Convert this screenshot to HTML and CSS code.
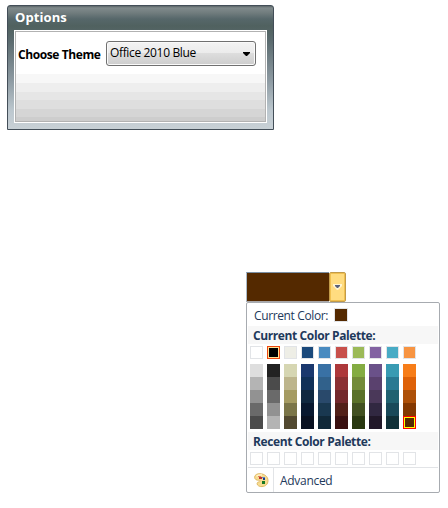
FILE: index.html
```html
<!DOCTYPE html>
<html lang="en">
<head>
<meta charset="utf-8">
<title>Options</title>
<link rel="stylesheet" href="styles.css">
</head>
<body>
<section class="window">
  <h1 class="window-title">Options</h1>
  <div class="window-body">
    <div class="option">
      <span class="option-label">Choose Theme</span>
      <div class="combo"><span class="combo-value">Office 2010 Blue</span><svg class="combo-arrow" width="7" height="4" viewBox="0 0 7 4"><path d="M0 0h7v1L4 4H3L0 1z"/></svg></div>
    </div>
  </div>
</section>
<section class="picker">
  <div class="split-button">
    <div class="split-color"></div>
    <div class="split-drop"><svg width="9" height="6" viewBox="0 0 9 6"><path d="M0 0h9v2L5 6H4L0 2z" fill="#fff4d0"/><path d="M2 1h5v1L5 4H4L2 2z" fill="#59607a"/></svg></div>
  </div>
  <div class="popup">
    <div class="current"><span class="current-label">Current Color:</span><i class="current-swatch"></i></div>
    <h2 class="heading">Current Color Palette:</h2>
    <div class="swatches" id="base"></div>
    <div class="shades" id="shades"></div>
    <h2 class="heading recent-heading">Recent Color Palette:</h2>
    <div class="swatches recent" id="recent"></div>
    <div class="advanced">
      <div class="advanced-icon">
        <svg width="15" height="15" viewBox="0 0 15 15">
          <path d="M6 .7C3 .5.6 2 .6 4.200c0 2.300 2.200 3.300 4.300 3 1.400-.1 1.500.9.6 1.700-1.300-.2-2.500.6-2.400 1.900.1 1.900 2.600 2.900 4.900 2.800 3.600-.1 6-2.500 6-6C14 3.400 10.500.9 6 .7z" fill="#f7dc91" stroke="#dcb45c" stroke-width=".9"/>
          <path d="M2.500 3.200Q4.500 1.600 8 1.900" stroke="#fff5cf" stroke-width="1.200" fill="none"/>
          <path d="M4 3h3v1H4z" fill="#e57c52"/>
          <path d="M5 4h3v2H5z" fill="#bd3431"/>
          <path d="M8 4h3v1H8z" fill="#5f86c4"/>
          <path d="M9 5h2v2H9z" fill="#173f91"/>
          <path d="M8 8h3v3H8z" fill="#177a22"/>
        </svg>
      </div>
      <span class="advanced-label">Advanced</span>
    </div>
  </div>
</section>
<script src="palette.js"></script>
</body>
</html>
```
FILE: styles.css
```css
* { box-sizing: border-box; }
body {
  margin: 0;
  width: 448px;
  height: 508px;
  padding: 5px 0 0 7px;
  background: #fff;
  font: 12px/16px "Open Sans", "Noto Sans", sans-serif;
  color: #000;
  overflow: hidden;
}
h1, h2 { margin: 0; }
span, h1, h2 { white-space: nowrap; }
.window {
  width: 267px;
  height: 125px;
  padding: 0 6px;
  border: 1px solid #434e58;
  border-radius: 3px 3px 0 0;
  background: linear-gradient(#5b6668 0, #808a8c 2px, #707c7d 7px, #56676a 13px, #50615f 20px, #5b6b6f 35px, #8e9ba3 75px, #bdc8cf 105px, #c8d1d6 100%);
}
.window-title {
  height: 24px;
  padding-left: 1px;
  font-size: 13px;
  line-height: 22px;
  letter-spacing: 0.08px;
  color: #fff;
}
.window-body {
  height: 93px;
  padding: 9px 0 0 2px;
  border: 1px solid #fff;
  outline: 1px solid #b2b2b2;
  outline-offset: -2px;
  background: linear-gradient(#fff 43px, #f7f7f7 43px 52px, #eee 52px 61px, #e6e6e6 61px 69px, #dedede 69px 78px, #d5d5d5 78px 86px, #cdcdcd 86px);
}
.option { display: flex; }
.option-label {
  width: 89px;
  padding: 7px 0 0 1px;
  font-weight: 700;
  letter-spacing: -0.4px;
}
.combo {
  display: flex;
  align-items: center;
  justify-content: space-between;
  margin-top: 1px;
  width: 150px;
  height: 25px;
  padding: 0 5px 1px 3px;
  border: 1px solid #707070;
  border-radius: 3px;
  box-shadow: inset 0 0 0 1px #fafafa;
  background: linear-gradient(#f3f3f3, #ebebeb 50%, #ddd 50%, #cdcdcd);
}
.combo-value { letter-spacing: -0.35px; }
.combo-arrow { margin-top: 2px; }
.picker {
  width: 194px;
  margin: 142px 0 0 239px;
}
.split-button { display: flex; height: 30px; }
.split-color {
  width: 83px;
  border: 1px solid #a9a7a8;
  border-top-color: #7b8fa3;
  border-left-color: #abbac9;
  border-right: 0;
  background: #542900;
}
.split-drop {
  display: flex;
  align-items: center;
  justify-content: center;
  width: 17px;
  border: 1px solid #c29b49;
  border-radius: 2px;
  box-shadow: inset 0 0 0 1px #f0c050;
  background: #ffdc80;
}
.popup {
  height: 191px;
  padding: 0 1px;
  border: 1px solid #a7abb0;
  border-radius: 2px;
  background: #fff;
  color: #1e395b;
}
.current { display: flex; height: 23px; padding: 5px 0 0 6px; }
.current-label { width: 80px; letter-spacing: -0.37px; }
.current-swatch {
  width: 14px;
  height: 14px;
  border: 1px solid #e2e4e7;
  background: #542900;
}
.heading {
  height: 18px;
  padding-left: 5px;
  background: #f7f7f7;
  font-size: 12px;
  line-height: 19px;
  letter-spacing: -0.39px;
}
.swatches {
  display: flex;
  gap: 4px;
  height: 13px;
  margin: 2px 0 0 2px;
}
.swatch { width: 13px; height: 13px; border: 1px solid #e2e4e7; }
.swatch.hovered { border-color: #ef4810; box-shadow: inset 0 0 0 1px #ffe294; }
.shades {
  display: grid;
  grid-template-columns: repeat(10, 13px);
  grid-auto-rows: 13px;
  column-gap: 4px;
  margin: 5px 0 0 2px;
}
.shade.selected { border: 1px solid #f00; box-shadow: inset 0 0 0 1px #ff0; }
.recent-heading { margin-top: 3px; }
.advanced {
  display: flex;
  height: 25px;
  margin-top: 2px;
  border-top: 1px solid #e2e4e7;
}
.advanced-icon {
  width: 26px;
  padding: 5px 0 0 6px;
  border-right: 1px solid #e2e4e7;
}
.advanced-icon svg { display: block; }
.advanced-label { padding: 5px 0 0 6px; letter-spacing: -0.3px; }
```
FILE: palette.js
```js
const base = ['#ffffff', '#000000', '#eeeee6', '#1a497b', '#4a8bc0', '#c8504b', '#9cba58', '#8262a2', '#48abc5', '#f79442'];
const shades = [
  ['#dedede', '#222222', '#d6d6b2', '#1a386e', '#3971a5', '#ad383b', '#84ac42', '#6a5189', '#399bb3', '#f77d19'],
  ['#b4b4b4', '#4b4b4b', '#bdb58c', '#103058', '#31618b', '#8b3033', '#738b39', '#5a416e', '#297992', '#de6108'],
  ['#929292', '#6a6a6a', '#a59b62', '#102840', '#29496b', '#73282b', '#5a7129', '#4a3859', '#216170', '#ad5008'],
  ['#6a6a6a', '#929292', '#7b7548', '#08182f', '#193850', '#522018', '#425121', '#312841', '#194959', '#843800'],
  ['#4b4b4b', '#b4b4b4', '#524930', '#081020', '#102838', '#391010', '#293810', '#211829', '#103038', '#542900']
];
function fill(id, colors, className, markAt, mark) {
  const box = document.getElementById(id);
  colors.forEach((color, i) => {
    const cell = document.createElement('div');
    cell.className = className + (i === markAt ? ' ' + mark : '');
    cell.style.backgroundColor = color;
    box.append(cell);
  });
}
fill('base', base, 'swatch', 1, 'hovered');
fill('shades', shades.flat(), 'shade', 49, 'selected');
fill('recent', Array(10).fill('#ffffff'), 'swatch', -1, '');
```
